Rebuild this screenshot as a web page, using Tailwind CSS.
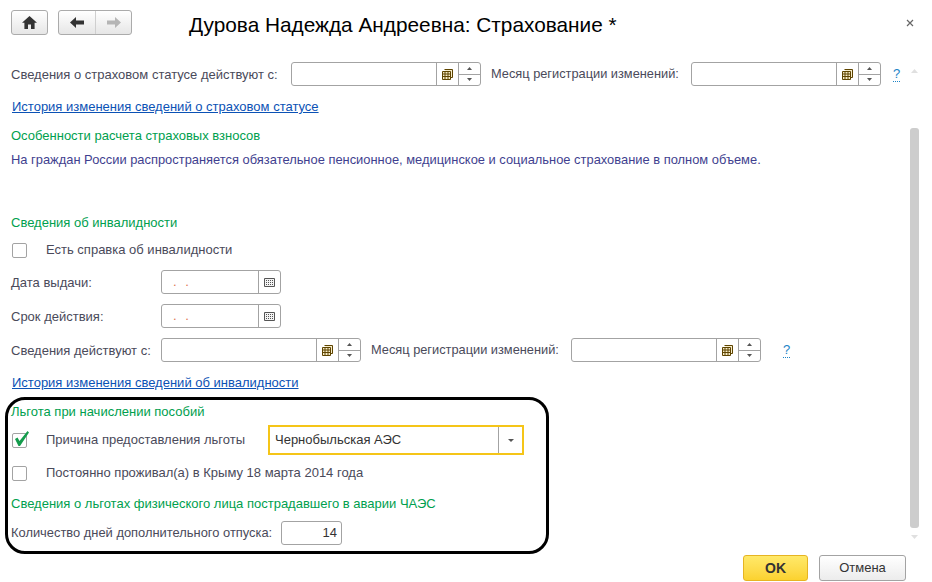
<!DOCTYPE html>
<html lang="ru">
<head>
  <meta charset="UTF-8" />
  <title>Дурова Надежда Андреевна: Страхование</title>
  <script src="https://cdn.jsdelivr.net/npm/@tailwindcss/browser@4"></script>
</head>
<body class="bg-white w-[932px] h-[582px] overflow-hidden font-['Liberation_Sans',Arial,sans-serif] text-[13px] leading-4 text-[#4a4a5a]">

  <!-- Header -->
  <div class="h-[50px] flex items-start pt-[10px] pl-[11px]">
    <button class="w-[37px] h-[25px] rounded-[3px] border border-[#ababab] bg-gradient-to-b from-white to-[#e6e6e6] flex items-center justify-center">
      <svg width="15" height="13" viewBox="0 0 15 13"><path d="M7.5 0 L15 6.8 H12.6 V13 H9 V8.5 H6 V13 H2.4 V6.8 H0 Z" fill="#333"/></svg>
    </button>
    <div class="ml-[10px] w-[74px] h-[25px] rounded-[3px] border border-[#ababab] bg-gradient-to-b from-white to-[#e6e6e6] flex">
      <div class="w-[37px] border-r border-[#cfcfcf] flex items-center justify-center">
        <svg width="14" height="11" viewBox="0 0 14 11"><path d="M0 5.5 L6 0 V3.5 H14 V7.5 H6 V11 Z" fill="#333"/></svg>
      </div>
      <div class="flex-1 flex items-center justify-center">
        <svg width="14" height="11" viewBox="0 0 14 11"><path d="M14 5.5 L8 0 V3.5 H0 V7.5 H8 V11 Z" fill="#b5b5b5"/></svg>
      </div>
    </div>
    <h1 class="ml-[57px] mt-[1px] text-[20.8px] leading-[28px] text-black">Дурова Надежда Андреевна: Страхование *</h1>
    <svg class="ml-[289px] mt-[9px]" width="8" height="8" viewBox="0 0 8 8"><path d="M1 1 L7 7 M7 1 L1 7" stroke="#666" stroke-width="1.2"/></svg>
  </div>

  <!-- Body -->
  <div class="h-[505px] flex">
    <div class="w-[905px] pl-[11px] pt-[12px]">

      <div class="flex items-center h-[24px]">
        <span class="w-[280px] pt-[2px]">Сведения о страховом статусе действуют с:</span>
        <div class="w-[190px] h-[24px] rounded-[3px] border border-[#a3a3a3] flex">
          <div class="flex-1"></div>
          <div class="w-[22px] border-l border-[#a3a3a3] flex items-center justify-center">
            <svg width="11" height="11" viewBox="0 0 11 11"><path d="M.5 2.5h8v8h-8zM2.5 .5h8v8h-2M.5 5h8M.5 7.5h8M3 2.5v8M6 2.5v8" fill="#e8c860" fill-opacity=".35" stroke="#5e4400"/></svg>
          </div>
          <div class="w-[22px] border-l border-[#a3a3a3] flex flex-col">
            <div class="flex-1 border-b border-[#a3a3a3] flex items-center justify-center"><svg width="5" height="3" viewBox="0 0 5 3"><path d="M2.5 0 5 3H0Z" fill="#555"/></svg></div>
            <div class="flex-1 flex items-center justify-center"><svg width="5" height="3" viewBox="0 0 5 3"><path d="M0 0H5L2.5 3Z" fill="#555"/></svg></div>
          </div>
        </div>
        <span class="ml-[10px] w-[200px] text-[12.8px]">Месяц регистрации изменений:</span>
        <div class="w-[190px] h-[24px] rounded-[3px] border border-[#a3a3a3] flex">
          <div class="flex-1"></div>
          <div class="w-[22px] border-l border-[#a3a3a3] flex items-center justify-center">
            <svg width="11" height="11" viewBox="0 0 11 11"><path d="M.5 2.5h8v8h-8zM2.5 .5h8v8h-2M.5 5h8M.5 7.5h8M3 2.5v8M6 2.5v8" fill="#e8c860" fill-opacity=".35" stroke="#5e4400"/></svg>
          </div>
          <div class="w-[22px] border-l border-[#a3a3a3] flex flex-col">
            <div class="flex-1 border-b border-[#a3a3a3] flex items-center justify-center"><svg width="5" height="3" viewBox="0 0 5 3"><path d="M2.5 0 5 3H0Z" fill="#555"/></svg></div>
            <div class="flex-1 flex items-center justify-center"><svg width="5" height="3" viewBox="0 0 5 3"><path d="M0 0H5L2.5 3Z" fill="#555"/></svg></div>
          </div>
        </div>
        <span class="ml-[12px] text-[#1c84c6] border-b border-dotted border-[#1c84c6] leading-[14px]">?</span>
      </div>

      <a class="block mt-[13px] ml-[1px] h-4 text-[#0b52b5] underline">История изменения сведений о страховом статусе</a>
      <div class="mt-[13px] h-4 text-[#00a04e]">Особенности расчета страховых взносов</div>
      <div class="mt-[8px] h-4 text-[12.9px] text-[#3f3f8f]">На граждан России распространяется обязательное пенсионное, медицинское и социальное страхование в полном объеме.</div>
      <div class="mt-[47px] h-4 text-[#00a04e]">Сведения об инвалидности</div>

      <div class="mt-[11px] h-4 flex items-center">
        <span class="ml-[1px] w-[15px] h-[15px] rounded-[2px] border border-[#a3a3a3]"></span>
        <span class="ml-[19px]">Есть справка об инвалидности</span>
      </div>

      <div class="mt-[12px] h-[24px] flex items-center">
        <span class="w-[150px] pt-[2px]">Дата выдачи:</span>
        <div class="w-[120px] h-[24px] rounded-[3px] border border-[#a3a3a3] flex">
          <div class="flex-1 pl-[11px] text-[#e0764f] leading-[22px] tracking-[0.5px]">.&nbsp;&nbsp;.</div>
          <div class="w-[22px] border-l border-[#a3a3a3] flex items-center justify-center">
            <svg width="11" height="9" viewBox="0 0 11 9"><path d="M.5 .5h10v8H.5z" fill="#f4f4f4" stroke="#555"/><path d="M2 2.5h7M2 4.5h7M2 6.5h7" stroke="#555" stroke-dasharray="1 1"/></svg>
          </div>
        </div>
      </div>

      <div class="mt-[10px] h-[24px] flex items-center">
        <span class="w-[150px] pt-[2px]">Срок действия:</span>
        <div class="w-[120px] h-[24px] rounded-[3px] border border-[#a3a3a3] flex">
          <div class="flex-1 pl-[11px] text-[#e0764f] leading-[22px] tracking-[0.5px]">.&nbsp;&nbsp;.</div>
          <div class="w-[22px] border-l border-[#a3a3a3] flex items-center justify-center">
            <svg width="11" height="9" viewBox="0 0 11 9"><path d="M.5 .5h10v8H.5z" fill="#f4f4f4" stroke="#555"/><path d="M2 2.5h7M2 4.5h7M2 6.5h7" stroke="#555" stroke-dasharray="1 1"/></svg>
          </div>
        </div>
      </div>

      <div class="mt-[10px] h-[24px] flex items-center">
        <span class="w-[150px] pt-[2px]">Сведения действуют с:</span>
        <div class="w-[200px] h-[24px] rounded-[3px] border border-[#a3a3a3] flex">
          <div class="flex-1"></div>
          <div class="w-[22px] border-l border-[#a3a3a3] flex items-center justify-center">
            <svg width="11" height="11" viewBox="0 0 11 11"><path d="M.5 2.5h8v8h-8zM2.5 .5h8v8h-2M.5 5h8M.5 7.5h8M3 2.5v8M6 2.5v8" fill="#e8c860" fill-opacity=".35" stroke="#5e4400"/></svg>
          </div>
          <div class="w-[22px] border-l border-[#a3a3a3] flex flex-col">
            <div class="flex-1 border-b border-[#a3a3a3] flex items-center justify-center"><svg width="5" height="3" viewBox="0 0 5 3"><path d="M2.5 0 5 3H0Z" fill="#555"/></svg></div>
            <div class="flex-1 flex items-center justify-center"><svg width="5" height="3" viewBox="0 0 5 3"><path d="M0 0H5L2.5 3Z" fill="#555"/></svg></div>
          </div>
        </div>
        <span class="ml-[10px] w-[200px] text-[12.8px]">Месяц регистрации изменений:</span>
        <div class="w-[190px] h-[24px] rounded-[3px] border border-[#a3a3a3] flex">
          <div class="flex-1"></div>
          <div class="w-[22px] border-l border-[#a3a3a3] flex items-center justify-center">
            <svg width="11" height="11" viewBox="0 0 11 11"><path d="M.5 2.5h8v8h-8zM2.5 .5h8v8h-2M.5 5h8M.5 7.5h8M3 2.5v8M6 2.5v8" fill="#e8c860" fill-opacity=".35" stroke="#5e4400"/></svg>
          </div>
          <div class="w-[22px] border-l border-[#a3a3a3] flex flex-col">
            <div class="flex-1 border-b border-[#a3a3a3] flex items-center justify-center"><svg width="5" height="3" viewBox="0 0 5 3"><path d="M2.5 0 5 3H0Z" fill="#555"/></svg></div>
            <div class="flex-1 flex items-center justify-center"><svg width="5" height="3" viewBox="0 0 5 3"><path d="M0 0H5L2.5 3Z" fill="#555"/></svg></div>
          </div>
        </div>
        <span class="ml-[22px] text-[#1c84c6] border-b border-dotted border-[#1c84c6] leading-[14px]">?</span>
      </div>

      <a class="block mt-[13px] ml-[1px] h-4 text-[#0b52b5] underline">История изменения сведений об инвалидности</a>

      <!-- Highlighted block -->
      <div class="mt-[6px] -ml-[6px] w-[544px] h-[157px] border-[3px] border-black rounded-[20px] pl-[3px] pt-[4px]">
        <div class="h-4 text-[#00a04e]">Льгота при начислении пособий</div>
        <div class="mt-[5px] h-[30px] flex items-center">
          <span class="ml-[1px] w-[15px] h-[15px] rounded-[2px] border border-[#a3a3a3] relative">
            <svg class="absolute -top-[4px] left-0" width="17" height="17" viewBox="0 0 17 17"><path d="M2 9 L4.5 7.5 L6.5 11 L14.5 1 L16 2.5 L7 16 L5.5 16 Z" fill="#149c4c"/></svg>
          </span>
          <span class="ml-[19px] w-[222px]">Причина предоставления льготы</span>
          <div class="w-[256px] h-[30px] border-2 border-[#f5c518] flex items-center">
            <span class="flex-1 pl-[5px] text-[#333]">Чернобыльская АЭС</span>
            <div class="w-[24px] h-[26px] border-l border-[#a3a3a3] flex items-center justify-center">
              <svg width="6" height="3" viewBox="0 0 6 3"><path d="M0 0H6L3 3Z" fill="#555"/></svg>
            </div>
          </div>
        </div>
        <div class="mt-[10px] h-4 flex items-center">
          <span class="ml-[1px] w-[15px] h-[15px] rounded-[2px] border border-[#a3a3a3]"></span>
          <span class="ml-[19px]">Постоянно проживал(а) в Крыму 18 марта 2014 года</span>
        </div>
        <div class="mt-[15px] h-4 text-[#00a04e]">Сведения о льготах физического лица пострадавшего в аварии ЧАЭС</div>
        <div class="mt-[9px] h-[24px] flex items-center">
          <span class="w-[270px] text-[12.9px]">Количество дней дополнительного отпуска:</span>
          <div class="w-[61px] h-[24px] rounded-[3px] border border-[#a3a3a3] text-right pr-[4px] leading-[22px] text-[#333]">14</div>
        </div>
      </div>
    </div>

    <!-- Scrollbar -->
    <div class="w-[9px] ml-[5px] flex flex-col items-center">
      <svg class="mt-[19px]" width="7" height="4" viewBox="0 0 7 4"><path d="M3.5 0 7 4H0Z" fill="#e0e0e0"/></svg>
      <div class="mt-[55px] w-[9px] h-[400px] rounded-[3px] bg-[#cdcdcd]"></div>
      <svg class="mt-[7px]" width="7" height="4" viewBox="0 0 7 4"><path d="M0 0H7L3.5 4Z" fill="#e0e0e0"/></svg>
    </div>
  </div>

  <!-- Footer -->
  <div class="h-[27px] flex justify-end pr-[26px]">
    <button class="w-[65px] h-[26px] rounded-[3px] border border-[#e6b422] bg-gradient-to-b from-[#ffe968] to-[#fbd22e] font-bold text-[14px] text-[#333]">OK</button>
    <button class="ml-[11px] w-[87px] h-[26px] rounded-[3px] border border-[#a3a3a3] bg-gradient-to-b from-white to-[#ececec] text-[#333]">Отмена</button>
  </div>
</body>
</html>
